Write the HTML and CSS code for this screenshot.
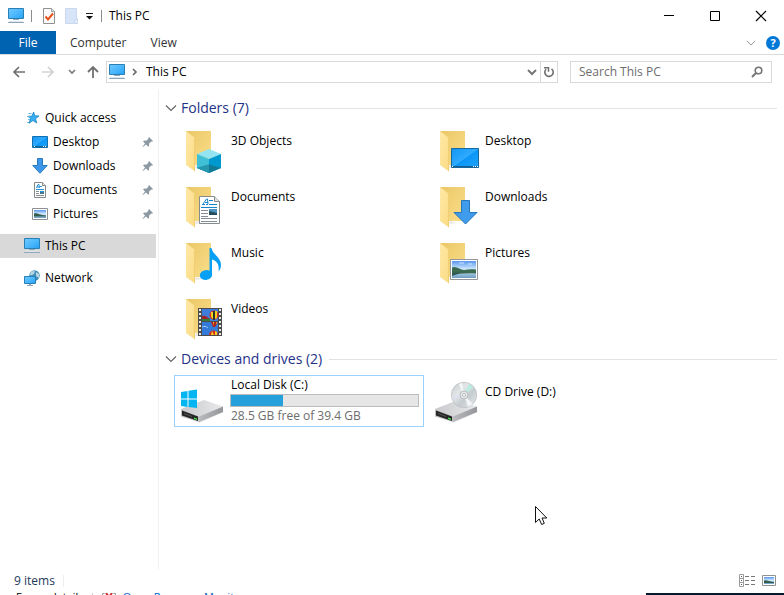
FILE: index.html
```html
<!DOCTYPE html>
<html lang="en">
<head>
<meta charset="utf-8">
<title>This PC</title>
<link rel="stylesheet" href="styles.css">
</head>
<body>
<svg class="defs" width="0" height="0" aria-hidden="true">
  <defs>
    <linearGradient id="screen" x1="0" y1="0" x2="1" y2="1"><stop offset="0" stop-color="#6fc9ff"/><stop offset=".5" stop-color="#4db8fd"/><stop offset="1" stop-color="#23a0f5"/></linearGradient>
    <linearGradient id="desk" x1="0" y1="0" x2="1" y2="1"><stop offset="0" stop-color="#1295f3"/><stop offset=".5" stop-color="#2fabff"/><stop offset=".52" stop-color="#0b96f7"/><stop offset="1" stop-color="#1fa3fb"/></linearGradient>
    <linearGradient id="back" x1="0" y1="0" x2="1" y2="1"><stop offset="0" stop-color="#eac765"/><stop offset="1" stop-color="#fbdf8d"/></linearGradient>
    <linearGradient id="flap" x1="0" y1="0" x2="1" y2="1"><stop offset="0" stop-color="#ffe9a8"/><stop offset="1" stop-color="#fbdb83"/></linearGradient>
    <linearGradient id="sky" x1="0" y1="0" x2="0" y2="1"><stop offset="0" stop-color="#5a97ee"/><stop offset=".5" stop-color="#d5ecff"/><stop offset=".7" stop-color="#a9cbe5"/><stop offset="1" stop-color="#6b9bc0"/></linearGradient>
    <linearGradient id="metal" x1="0" y1="0" x2="1" y2="0"><stop offset="0" stop-color="#c8c9cc"/><stop offset="1" stop-color="#e9e9eb"/></linearGradient>
    <linearGradient id="metalside" x1="0" y1="0" x2="1" y2="0"><stop offset="0" stop-color="#b9babd"/><stop offset="1" stop-color="#95969a"/></linearGradient>
    <linearGradient id="disc" x1="0" y1="0" x2="1" y2="1"><stop offset="0" stop-color="#c3c8ca"/><stop offset=".35" stop-color="#e4e7e8"/><stop offset=".6" stop-color="#c5cccf"/><stop offset="1" stop-color="#e8eaeb"/></linearGradient>

    <symbol id="i-pc" viewBox="0 0 16 16">
      <path d="M.5.5h15v10H.5z" fill="url(#screen)" stroke="#2b80b3"/>
      <path d="M5 11.500h6M0 14.500h16" stroke="#8ea7bd"/><path d="M1 13.500h14" stroke="#dce5ed"/>
    </symbol>
    <symbol id="i-star" viewBox="0 0 16 16">
      <path d="M9.600 2l1.200 3.800 4.200.2-3.500 2.700 1.300 4.300-3.800-2.500-4 2.800 1.500-4.700-2.600-2.300 4.100-.2z" fill="#39adf1" stroke="#1b84c5" stroke-width=".8"/>
      <path d="M4.500 3.500h3M3 6.500h3M4 9.500h2M3 12.500h2" stroke="#67b9e8"/>
    </symbol>
    <symbol id="i-desk" viewBox="0 0 16 16">
      <path d="M.5 2.500h15v11H.5z" fill="url(#desk)" stroke="#146fae"/><path d="M1 12.500h14" stroke="#176294"/><path d="M2 12.500h1m8 0h1m1 0h1" stroke="#fff"/>
    </symbol>
    <symbol id="i-down" viewBox="0 0 16 16">
      <path d="M5.500.5h5v7h4.700L8 15.300.8 7.500h4.700z" fill="#3d97e8" stroke="#2979bd"/>
    </symbol>
    <symbol id="i-doc" viewBox="0 0 16 16">
      <path d="M2.500.5h8l3 3v12h-11z" fill="#fff" stroke="#858a8d"/><path d="M10.500.5v3h3" fill="#e4e6e7" stroke="#858a8d"/>
      <path d="M4.500 6l1.500-3.500h1L7.500 6M5 5h2M8 4.500h2M4 7.500h8M8 9.500h4" fill="none" stroke="#2492d5"/><path d="M4 9.500h3M4 11.500h3M4 13.500h8" stroke="#848b91"/><path d="M8 10h4v2H8z" fill="#42788f"/>
    </symbol>
    <symbol id="i-pic" viewBox="0 0 16 16">
      <path d="M.5 2.500h15v11H.5z" fill="#fff" stroke="#8c9194"/><path d="M2 4h12v8H2z" fill="url(#sky)"/><path d="M2 7.500c3-.8 5 1.500 12 2v1H2z" fill="#315e4c"/>
    </symbol>
    <symbol id="i-net" viewBox="0 0 16 16">
      <circle cx="10.500" cy="5.500" r="5.200" fill="#428eb9"/><path d="M7 1.500l4-.5-1 3-3 1.500-1-1zM12 2l3 2v4l-3-2z" fill="#b7d8e3"/>
      <path d="M.5 6.500h11v7H.5z" fill="url(#screen)" stroke="#2b80b3"/><path d="M3 15.500h6M5 14.500h2" stroke="#8ea7bd"/>
    </symbol>
    <symbol id="i-pin" viewBox="0 0 12 12">
      <path d="M7 1l4 4-1 .8-.8-.2L7 7.800l.2 2-1 1L4 8.400 1 11l-.5-.3L3 7.600 1 5.300l1-.9 2.200.3 2.200-2L6.200 2z" fill="#8d9aa5"/>
    </symbol>

    <symbol id="b-folder" viewBox="0 0 48 48">
      <path d="M15 42l8-1-7-2z" fill="#e7e7e7"/><path d="M6 5h25v34H12z" fill="url(#back)"/>
      <path d="M6 5l9 7v33.500L6 39z" fill="url(#flap)"/><path d="M14.500 12v33" stroke="#f2cf75"/>
    </symbol>
    <symbol id="b-3d" viewBox="0 0 48 48">
      <path d="M29 23l12 5-12 5-12-5z" fill="#93e4f0"/><path d="M17 28l12 5v14l-12-5z" fill="#3fc0d6"/><path d="M41 28l-12 5v14l12-5z" fill="#0099cf"/><path d="M17 42l12-3.500V47zM29 38.500L41 42l-12 5z" fill="#137a95"/><path d="M29 38.500V47l-12-5z" fill="#2598ad"/>
    </symbol>
    <symbol id="b-desk" viewBox="0 0 48 48">
      <path d="M17.500 22.500h27v19h-27z" fill="url(#desk)" stroke="#17679c"/><path d="M18 40.500h26" stroke="#145f94"/><path d="M18 40.500h1m20 0h1m1 0h1m1 0h1" stroke="#fff"/>
    </symbol>
    <symbol id="b-doc" viewBox="0 0 48 48">
      <path d="M19.500 14.500h15l5 5v22h-20z" fill="#fff" stroke="#858a8d"/><path d="M34.500 14.500v5h5" fill="#e1e4e5" stroke="#858a8d"/>
      <path d="M22 22.500h3m1 0h2M23 22l3.500-5h1l.5 5M25 20.500h3" fill="none" stroke="#1684cb"/><path d="M29 18.500h4M29 22.500h8M21 25.500h16" stroke="#1684cb"/>
      <path d="M21 28.500h7M21 31.500h7M21 34.500h7M21 36.500h16M21 39.500h16" stroke="#858e96"/><path d="M29 27h8v6h-8z" fill="#4f93c4"/><path d="M29 29l4 1 4 1v2h-8z" fill="#254d5b"/>
    </symbol>
    <symbol id="b-down" viewBox="0 0 48 48">
      <path d="M27.500 18.500h8v12h7.500L31.500 42 20 30.500h7.500z" fill="#3f9bec" stroke="#2676b9"/>
    </symbol>
    <symbol id="b-music" viewBox="0 0 48 48">
      <ellipse cx="26" cy="37" rx="6.300" ry="4.800" transform="rotate(-12 26 37)" fill="#08a0f5"/>
      <path d="M29.500 37V10h2c.5 6 9.500 9 9.500 17 0 3-1 5-2.500 6.500 1-7-1.500-10.500-6.500-12V37z" fill="#08a0f5"/>
    </symbol>
    <symbol id="b-pic" viewBox="0 0 48 48">
      <path d="M16.500 21.500h27v20h-27z" fill="#fff" stroke="#929699"/><path d="M18 23h24v17H18z" fill="url(#sky)"/><path d="M18 29.500c4-2 8 2 12 2.500 4-1 8-1 12-.5v4c-8-1-16 1-24 0z" fill="#3a6b50"/><path d="M18 35c4-1 6-1 9 0l-9 3z" fill="#315a55"/><path d="M25 25h5m4 1h4" stroke="#cce4ff"/>
    </symbol>
    <symbol id="b-video" viewBox="0 0 48 48">
      <path d="M18 14h24v28H18z" fill="#4c4c4c"/><path d="M20 15v27M40 15v27" stroke="#e9e9e9" stroke-width="2" stroke-dasharray="2 2"/>
      <path d="M22 15h16v12H22z" fill="#3f7ddd"/><path d="M22 28h16v13H22z" fill="#347bd9"/>
      <path d="M22 24h8v3h-8z" fill="#387c3a"/><path d="M22 22c3-1 5 0 7 3h-7z" fill="#9b2630"/>
      <circle cx="34" cy="21" r="4.500" fill="#d92b1f"/><path d="M31 18h2v7l-2-2zM35 17h2v7l-2 1z" fill="#f6cf21"/><path d="M33 17h2v9h-2z" fill="#29332d"/>
      <path d="M31 28h7l-3 5h-2z" fill="#b02222"/><path d="M33 28h1v4zM36 28h1l-1 3z" fill="#f6cf21"/>
      <path d="M29 41c0-6 9-6 9 0z" fill="#d92b1f"/><path d="M31 41l1-4 2 4zM35 41v-4l2 1v3z" fill="#f6cf21"/><path d="M22 33c2-1 4-1 6 1" stroke="#9dcaf6" fill="none"/>
    </symbol>
    <symbol id="b-base" viewBox="0 0 48 48">
      <path d="M19 46l25-11-2-2-24 10z" fill="#e6e6e6"/><path d="M1 32l23-9 19 6.500L19 40z" fill="url(#metal)"/><path d="M19 39.500l24-10v5.500L19 45z" fill="url(#metalside)"/>
      <path d="M1 32l18 7.500V45L1 39.500z" fill="#bfc0c2"/><path d="M2 33.500l16 6V44L2 38.500z" fill="#252525"/><path d="M4 36.500l8 3" stroke="#565656"/><path d="M14 40.500l3 1v1.500l-3-1z" fill="#3fe447"/>
    </symbol>
    <symbol id="b-win" viewBox="0 0 48 48">
      <path d="M1 15l6.500-1v7.500H1zM8.500 13.800L17 12.500v9H8.500zM1 22.500h6.500V30L1 29zM8.500 22.500H17V31l-8.500-1z" fill="#03b5f0"/>
    </symbol>
    <symbol id="b-disc" viewBox="0 0 48 48">
      <circle cx="30" cy="18" r="12.700" fill="url(#disc)" stroke="#b9bdbf" stroke-width=".7"/><path d="M30 18l5-11 4 3z" fill="#b9eedf"/><path d="M30 18l-5-11 3-1z" fill="#f7f8f8"/><path d="M30 18l4 12 5-3z" fill="#f3f4f5"/><path d="M30 18l-12 1 1 4z" fill="#dfdff0"/>
      <circle cx="30" cy="18" r="4" fill="#e3e6e7" stroke="#b1b5b7" stroke-width=".8"/><circle cx="30" cy="18" r="1.500" fill="#fff" stroke="#a4a9ab" stroke-width=".7"/>
    </symbol>
    <symbol id="i-chev" viewBox="0 0 12 12"><path d="M1 3.500l5 5 5-5" fill="none" stroke="currentColor" stroke-width="1.200"/></symbol>
  </defs>
</svg>

<div class="window">
  <header class="titlebar">
    <svg class="ic16"><use href="#i-pc"/></svg>
    <span class="rule"></span>
    <button class="quick" aria-label="Properties"><svg class="ic16" viewBox="0 0 16 16"><path d="M2.500.5h8l3 3v12h-11z" fill="#fafafa" stroke="#919191"/><path d="M10.500.5v3h3" fill="#ddd" stroke="#a2a2a2"/><path d="M4.500 8.500l2.500 3 5-6" fill="none" stroke="#e8501c" stroke-width="2"/></svg></button>
    <button class="quick" aria-label="New folder"><svg class="ic16" viewBox="0 0 16 16"><path d="M1.500.5h11v10h1v5h-12z" fill="#d8e4f7" stroke="#cbd9ee"/><path d="M10.500 11.500h3v4h-3z" fill="#e5edfa" stroke="#cbd9ee"/></svg></button>
    <button class="custom" aria-label="Customize toolbar"><svg width="8" height="8" viewBox="0 0 8 8"><path d="M1 1.500h7" stroke="#222"/><path d="M1 4h7L4.500 7.500z" fill="#111"/></svg></button>
    <span class="rule"></span>
    <h1>This PC</h1>
    <div class="controls">
      <button aria-label="Minimize"><svg width="12" height="12"><path d="M1 5.500h10" stroke="#000"/></svg></button>
      <button aria-label="Maximize"><svg width="12" height="12"><path d="M1.500 1.500h9v9h-9z" fill="none" stroke="#000"/></svg></button>
      <button aria-label="Close"><svg width="12" height="12"><path d="M1 1l10 10M11 1L1 11" stroke="#000" stroke-width="1.200"/></svg></button>
    </div>
  </header>

  <nav class="ribbon" aria-label="Ribbon">
    <button class="file">File</button>
    <button class="tab">Computer</button>
    <button class="tab">View</button>
    <div class="tools">
      <button aria-label="Expand ribbon"><svg width="10" height="12"><use href="#i-chev"/></svg></button>
      <button aria-label="Help" class="help">?</button>
    </div>
  </nav>

  <div class="addressrow">
    <button aria-label="Back" class="go"><svg width="14" height="14"><path d="M13 7H2M7 2L2 7l5 5" fill="none" stroke="#707070" stroke-width="1.700"/></svg></button>
    <button aria-label="Forward" class="go"><svg width="14" height="14"><path d="M1 7h11M7 2l5 5-5 5" fill="none" stroke="#d2d2d2" stroke-width="1.700"/></svg></button>
    <button aria-label="Recent locations" class="recent"><svg width="8" height="8" viewBox="0 0 8 8"><path d="M1 2l3 3 3-3" fill="none" stroke="#777" stroke-width="1.600"/></svg></button>
    <button aria-label="Up" class="up"><svg width="12" height="14"><path d="M6 13V2M1 7l5-5 5 5" fill="none" stroke="#707070" stroke-width="1.800"/></svg></button>
    <div class="address">
      <svg class="ic16"><use href="#i-pc"/></svg>
      <svg class="sep" width="8" height="8" viewBox="0 0 8 8"><path d="M2 1l3 3-3 3" fill="none" stroke="#666" stroke-width="1.600"/></svg>
      <button class="crumb">This PC</button>
      <button class="drop" aria-label="Previous locations"><svg width="10" height="10" viewBox="0 0 10 10"><path d="M1 3l4 4 4-4" fill="none" stroke="#777" stroke-width="2"/></svg></button>
      <button class="refresh" aria-label="Refresh"><svg width="12" height="12" viewBox="0 0 12 12"><path d="M8.500 2.800a4.200 4.200 0 1 1-5.500.5" fill="none" stroke="#707070" stroke-width="1.600"/><path d="M1 1.700h4.500v4" fill="none" stroke="#707070" stroke-width="1.500"/></svg></button>
    </div>
    <label class="search">
      <input type="text" placeholder="Search This PC" aria-label="Search This PC">
      <svg width="12" height="12"><circle cx="7.500" cy="4.500" r="3.300" fill="none" stroke="#737373" stroke-width="1.600"/><path d="M5 7l-4 4" stroke="#737373" stroke-width="2"/></svg>
    </label>
  </div>

  <div class="body">
    <nav class="side" aria-label="Navigation pane">
      <a href="#" class="row top"><svg class="ic16"><use href="#i-star"/></svg>Quick access</a>
      <a href="#" class="row"><svg class="ic16"><use href="#i-desk"/></svg>Desktop<svg class="pin"><use href="#i-pin"/></svg></a>
      <a href="#" class="row"><svg class="ic16"><use href="#i-down"/></svg>Downloads<svg class="pin"><use href="#i-pin"/></svg></a>
      <a href="#" class="row"><svg class="ic16"><use href="#i-doc"/></svg>Documents<svg class="pin"><use href="#i-pin"/></svg></a>
      <a href="#" class="row"><svg class="ic16"><use href="#i-pic"/></svg>Pictures<svg class="pin"><use href="#i-pin"/></svg></a>
      <a href="#" class="row top apart current" aria-current="page"><svg class="ic16"><use href="#i-pc"/></svg>This PC</a>
      <a href="#" class="row top apart"><svg class="ic16"><use href="#i-net"/></svg>Network</a>
    </nav>
    <main>
      <section>
        <h2><svg width="12" height="12"><use href="#i-chev"/></svg><span>Folders (7)</span></h2>
        <div class="tiles">
          <a href="#" class="tile"><svg class="ic48"><use href="#b-folder"/><use href="#b-3d"/></svg><span class="name">3D Objects</span></a>
          <a href="#" class="tile"><svg class="ic48"><use href="#b-folder"/><use href="#b-desk"/></svg><span class="name">Desktop</span></a>
          <a href="#" class="tile"><svg class="ic48"><use href="#b-folder"/><use href="#b-doc"/></svg><span class="name">Documents</span></a>
          <a href="#" class="tile"><svg class="ic48"><use href="#b-folder"/><use href="#b-down"/></svg><span class="name">Downloads</span></a>
          <a href="#" class="tile"><svg class="ic48"><use href="#b-folder"/><use href="#b-music"/></svg><span class="name">Music</span></a>
          <a href="#" class="tile"><svg class="ic48"><use href="#b-folder"/><use href="#b-pic"/></svg><span class="name">Pictures</span></a>
          <a href="#" class="tile"><svg class="ic48"><use href="#b-folder"/><use href="#b-video"/></svg><span class="name">Videos</span></a>
        </div>
      </section>
      <section>
        <h2><svg width="12" height="12"><use href="#i-chev"/></svg><span>Devices and drives (2)</span></h2>
        <div class="tiles">
          <a href="#" class="tile selected"><svg class="ic48"><use href="#b-base"/><use href="#b-win"/></svg>
            <span class="drive"><span>Local Disk (C:)</span><span class="bar"><span class="used"></span></span><span class="free">28.5 GB free of 39.4 GB</span></span></a>
          <a href="#" class="tile"><svg class="ic48"><use href="#b-base"/><use href="#b-disc"/></svg><span class="name">CD Drive (D:)</span></a>
        </div>
      </section>
    </main>
  </div>

  <footer class="status">
    <span class="count">9 items</span>
    <div class="views">
      <button aria-label="Details view"><svg width="16" height="14"><path d="M.5.5h4v12h-4zM.5 4.500h4M.5 8.500h4" fill="none" stroke="#9a9a9a"/><path d="M2 2.500h1M2 6.500h1M2 10.500h1" stroke="#555"/><path d="M6 2.500h4m2 0h4M6 6.500h4m2 0h4M6 10.500h4m2 0h4" stroke="#777"/></svg></button>
      <button aria-label="Large icons view"><svg width="14" height="14" viewBox="0 0 14 14"><path d="M.5 1.500h13v10H.5z" fill="#fff" stroke="#8c9194"/><path d="M2 3h10v7H2z" fill="url(#sky)"/><path d="M2 6.500c3-.8 5 1 10 1.500v1H2z" fill="#315e4c"/></svg></button>
    </div>
  </footer>
</div>

<div class="behind">
  <span class="fewer">Fewer details</span>
  <svg width="16" height="6"><path d="M1.500 5V.5h2M14.500 5V.5h-2" fill="none" stroke="#999"/><path d="M5 0l3 4 3-4" fill="none" stroke="#c33" stroke-width="2"/></svg>
  <a href="#">Open Resource Monitor</a>
  <span class="dark"></span>
</div>

<svg class="cursor" width="13" height="20" viewBox="0 0 13 20"><path d="M.5.5v16l3.700-3.500 2.500 5.500 2.600-1.200L7 12h4.800z" fill="#fff" stroke="#111"/></svg>
</body>
</html>
```
FILE: styles.css
```css
* { box-sizing: border-box; }

body {
  margin: 0;
  height: 100vh;
  display: flex;
  flex-direction: column;
  overflow: hidden;
  background: #fff;
  color: #000;
  font: 12px/16px "Open Sans", "Noto Sans", sans-serif;
}

button {
  display: flex;
  align-items: center;
  justify-content: center;
  padding: 0;
  border: 0;
  background: none;
  color: inherit;
  font: inherit;
}

a { color: inherit; text-decoration: none; }
svg { display: block; flex: none; }
.defs { position: absolute; }
.ic16 { width: 16px; height: 16px; }
.ic48 { width: 48px; height: 48px; }

.window { flex: 1; min-height: 0; display: flex; flex-direction: column; }

.titlebar { display: flex; align-items: center; height: 31px; padding-left: 8px; }
.rule { width: 1px; height: 12px; margin: 0 7px; background: #8c8c8c; }
.quick { width: 16px; margin-left: 2px; }
.quick + .quick { margin-left: 7px; }
.custom { width: 14px; padding-left: 3px; }
.titlebar h1 { margin: 0; font-size: 12px; font-weight: 400; }
.controls { display: flex; margin-left: auto; }
.controls button { width: 46px; height: 30px; }

.ribbon { display: flex; height: 24px; border-bottom: 1px solid #dadbdc; color: #333; }
.file { width: 56px; background: #0063b1; color: #fff; }
.tab { padding: 0 10px 0 14px; }
.tools { display: flex; align-items: center; gap: 10px; margin-left: auto; padding-right: 4px; color: #999; }
.help { width: 14px; height: 14px; border-radius: 50%; background: #0078d7; color: #fff; font-size: 11px; font-weight: 700; }

.addressrow { display: flex; align-items: center; height: 34px; padding: 0 12px; }
.go { width: 14px; margin-right: 15px; }
.recent { width: 8px; margin-right: 11px; }
.go + .recent { margin-left: -2px; }
.up { width: 12px; margin-right: 7px; }
.address { flex: 1; display: flex; align-items: center; height: 22px; padding-left: 2px; border: 1px solid #d9d9d9; }
.sep { margin: 0 7px 0 6px; }
.drop { width: 16px; margin-left: auto; }
.refresh { width: 17px; height: 20px; border-left: 1px solid #d9d9d9; }
.search { display: flex; align-items: center; width: 202px; height: 22px; margin-left: 12px; padding: 0 8px; border: 1px solid #d9d9d9; }
.search input { flex: 1; min-width: 0; padding: 0; border: 0; outline: 0; background: none; font: inherit; }
.search input::placeholder { color: #6d6d6d; opacity: 1; }

.body { flex: 1; min-height: 0; display: flex; }
.side { width: 159px; padding: 17px 2px 0 0; border-right: 1px solid #f0f0f0; }
.row { display: flex; align-items: center; gap: 5px; height: 24px; padding: 0 2px 0 32px; }
.row.top { padding-left: 24px; }
.row.apart { margin-top: 8px; }
.current { background: #d9d9d9; }
.pin { width: 12px; height: 12px; margin-left: auto; }

main { flex: 1; min-width: 0; padding: 5px 7px 0 6px; }
h2 { display: flex; align-items: center; gap: 4px; height: 30px; margin: 0; padding-bottom: 2px; color: #1e3287; font-size: 14px; font-weight: 400; line-height: 20px; }
h2 svg { color: #666; }
h2::after { content: ""; flex: 1; height: 1px; margin-left: 3px; background: #e2e2e2; }
.tiles { display: grid; grid-template-columns: repeat(auto-fill, 250px); gap: 4px; padding-left: 9px; }
section + section { margin-top: 1px; }
.tile { display: flex; gap: 3px; height: 52px; padding: 1px 4px 1px 5px; border: 1px solid transparent; }
.selected { border-color: #99d1ff; }
.name { margin-top: 7px; }
.drive { flex: 1; display: flex; flex-direction: column; margin-left: -1px; }
.drive > span { padding-left: 1px; }
.drive .bar { height: 13px; margin: 1px 0; padding: 0; border: 1px solid #bcbcbc; background: #e6e6e6; }
.used { display: block; width: 28%; height: 100%; background: #26a0da; }
.free { color: #6d6d6d; }

.status { display: flex; align-items: center; height: 24px; padding: 0 8px 0 14px; color: #1e395b; }
.count { padding-right: 8px; border-right: 1px solid #eee; line-height: 12px; }
.views { display: flex; gap: 7px; margin-left: auto; }

.behind { display: flex; align-items: flex-start; height: 2px; padding-left: 16px; overflow: hidden; font-size: 11px; line-height: 8px; }
.fewer { padding-right: 8px; border-right: 1px solid #ccc; margin-right: 8px; }
.behind a { margin-left: 6px; color: #0066cc; }
.dark { flex: 0 0 138px; height: 2px; margin-left: auto; background: #041830; }

.cursor { position: absolute; left: 535px; top: 506px; }
```
